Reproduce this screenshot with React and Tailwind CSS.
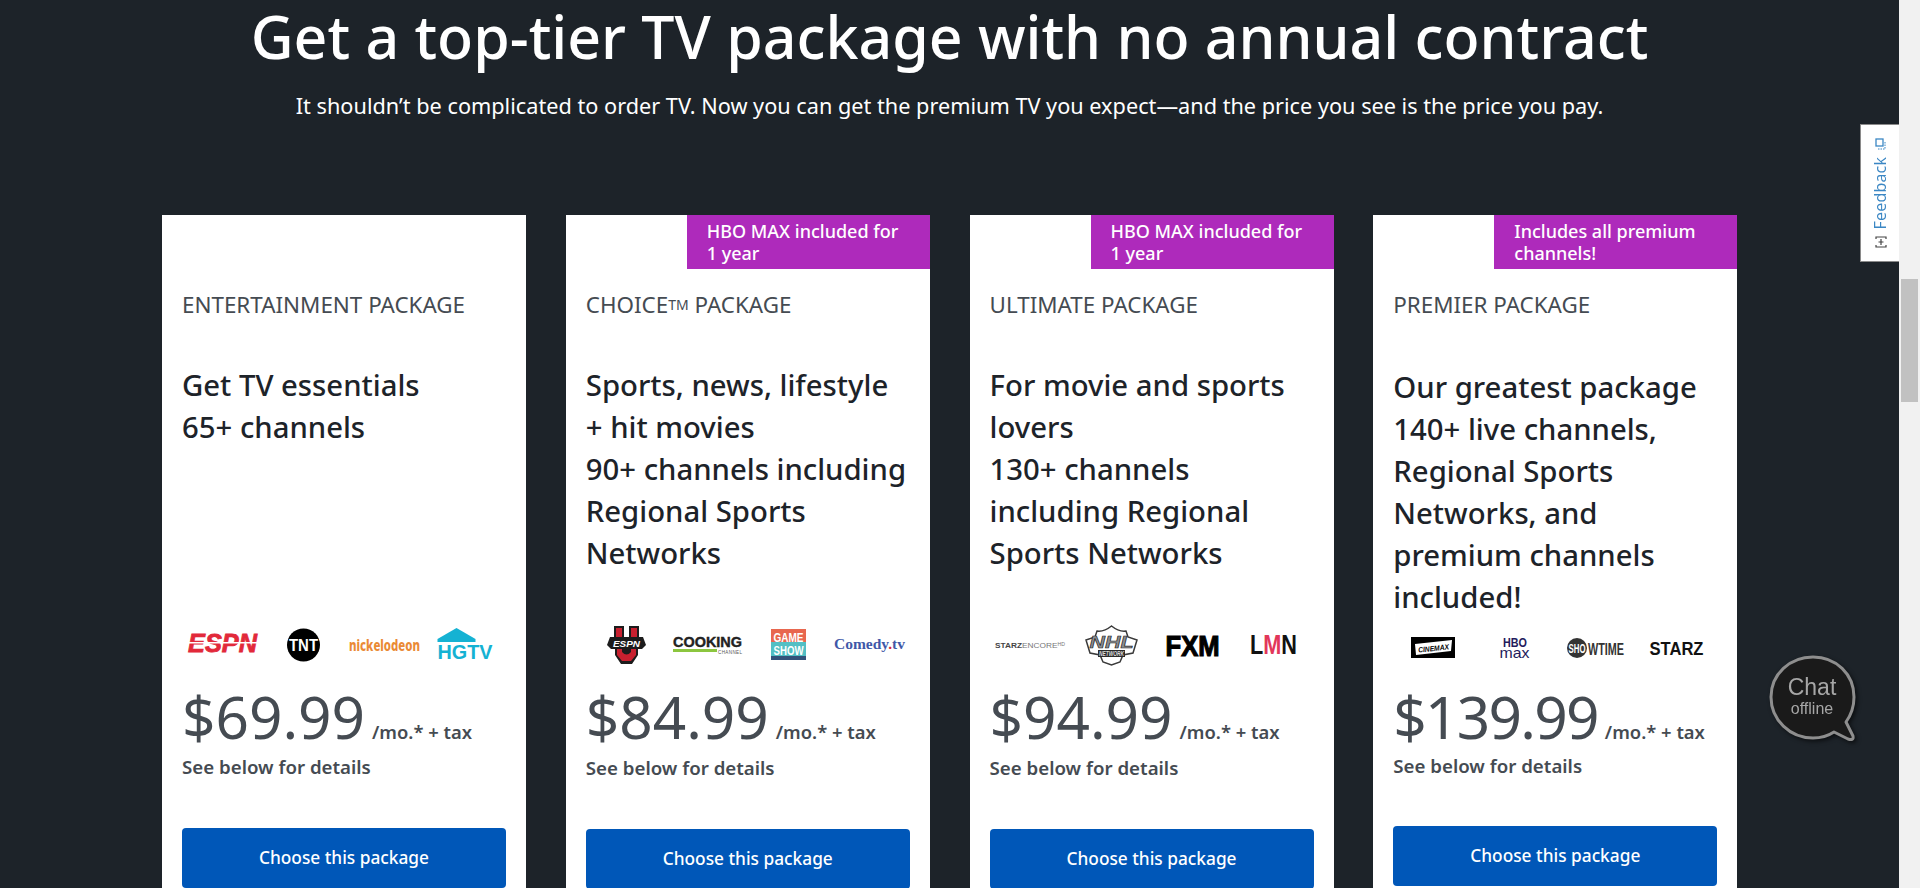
const font = { fontFamily: '"Noto Sans", sans-serif' };

function EspnLogo() {
  return (
    <svg viewBox="0 0 81 44" className="w-[81px] h-[44px]">
      <text x="40.5" y="29" textAnchor="middle" fontFamily="Liberation Sans" fontWeight="700" fontStyle="italic" fontSize="26" fill="#e2293a" stroke="#e2293a" strokeWidth="0.8" textLength="69" lengthAdjust="spacingAndGlyphs">ESPN</text>
      <rect x="5" y="19" width="71" height="1.5" fill="#fff" />
    </svg>
  );
}

function TntLogo() {
  return (
    <svg viewBox="0 0 81 44" className="w-[81px] h-[44px]">
      <circle cx="40.5" cy="22" r="16.5" fill="#000" />
      <text x="40.5" y="28" textAnchor="middle" fontFamily="Liberation Sans" fontWeight="700" fontSize="17" fill="#fff" textLength="29" lengthAdjust="spacingAndGlyphs">TNT</text>
    </svg>
  );
}

function NickLogo() {
  return (
    <svg viewBox="0 0 81 44" className="w-[81px] h-[44px]">
      <text x="40.5" y="28" textAnchor="middle" fontFamily="Noto Sans" fontWeight="800" fontSize="15" fill="#ea8a35" textLength="71" lengthAdjust="spacingAndGlyphs">nickelodeon</text>
    </svg>
  );
}

function HgtvLogo() {
  return (
    <svg viewBox="0 0 81 44" className="w-[81px] h-[44px]">
      <path d="M12.5 16 L31.5 5 L50.5 16 V19 H12.5 Z" fill="#15b2d3" />
      <text x="40" y="35.5" textAnchor="middle" fontFamily="Liberation Sans" fontWeight="700" fontSize="21" fill="#15b2d3" textLength="55" lengthAdjust="spacingAndGlyphs">HGTV</text>
    </svg>
  );
}

function EspnuLogo() {
  return (
    <svg viewBox="0 0 81 44" className="w-[81px] h-[44px]">
      <path d="M28 3 H38 V14 H43 V3 H53 V14 H57 L60 22 L56 26 H52 V32 L46 41 H35 L29 32 V26 H25 L21 22 L24 14 H28 Z" fill="#1c1c1c" />
      <path d="M30 5 H36 V14 H30 Z M45 5 H51 V14 H45 Z M31 26 H36 V29 Q40.5 34 45 29 V26 H50 V32 L45 38 H36 L31 32 Z" fill="#c8202f" />
      <text x="40.5" y="24" textAnchor="middle" fontFamily="Liberation Sans" fontWeight="700" fontStyle="italic" fontSize="9" fill="#fff" textLength="27" lengthAdjust="spacingAndGlyphs">ESPN</text>
    </svg>
  );
}

function CookingLogo() {
  return (
    <svg viewBox="0 0 81 44" className="w-[81px] h-[44px]">
      <text x="40.5" y="24" textAnchor="middle" fontFamily="Liberation Sans" fontWeight="700" fontSize="14" fill="#222" stroke="#222" strokeWidth="0.4" textLength="69" lengthAdjust="spacingAndGlyphs">COOKING</text>
      <rect x="6" y="26" width="44" height="3" fill="#8cc63f" />
      <text x="75" y="31" textAnchor="end" fontFamily="Liberation Sans" fontSize="4.5" fill="#555" textLength="24" lengthAdjust="spacing">CHANNEL</text>
    </svg>
  );
}

function GsnLogo() {
  return (
    <svg viewBox="0 0 81 44" className="w-[81px] h-[44px]">
      <rect x="23" y="6" width="35" height="15" fill="#e8674f" />
      <rect x="23" y="19" width="35" height="14" fill="#52bfc4" />
      <rect x="23" y="33" width="35" height="4" fill="#33527a" />
      <text x="40.5" y="18.5" textAnchor="middle" fontFamily="Liberation Sans" fontWeight="700" fontSize="13" fill="#fff" textLength="30" lengthAdjust="spacingAndGlyphs">GAME</text>
      <text x="40.5" y="31.5" textAnchor="middle" fontFamily="Liberation Sans" fontWeight="700" fontSize="13" fill="#fff" textLength="30" lengthAdjust="spacingAndGlyphs">SHOW</text>
    </svg>
  );
}

function ComedyLogo() {
  return (
    <svg viewBox="0 0 81 44" className="w-[81px] h-[44px]">
      <text x="40.5" y="26" textAnchor="middle" fontFamily="Liberation Serif" fontWeight="700" fontSize="14" fill="#3f58a8" textLength="71" lengthAdjust="spacingAndGlyphs">Comedy<tspan fill="#d8263c">.</tspan>tv</text>
    </svg>
  );
}

function EncoreLogo() {
  return (
    <svg viewBox="0 0 81 44" className="w-[81px] h-[44px]">
      <text x="5" y="25" fontFamily="Liberation Sans" fontSize="8" fill="#777" textLength="70" lengthAdjust="spacingAndGlyphs"><tspan fontWeight="700" fill="#444">STARZ</tspan>ENCORE<tspan fontSize="5" dy="-2">HD</tspan></text>
    </svg>
  );
}

function NhlLogo() {
  return (
    <svg viewBox="0 0 81 44" className="w-[81px] h-[44px]">
      <path d="M26 8 Q33 9 40.5 3 Q48 9 55 8 L57 14 L66 17 L62 30 L52 32 L49 39 L40.5 42 L32 39 L29 32 L19 30 L15 17 L24 14 Z" fill="#fff" stroke="#3a3a3a" strokeWidth="1.5" />
      <text x="40.5" y="25" textAnchor="middle" fontFamily="Liberation Sans" fontWeight="700" fontStyle="italic" fontSize="17" fill="#8b8d90" stroke="#222" strokeWidth="0.6" textLength="44" lengthAdjust="spacingAndGlyphs">NHL</text>
      <rect x="27" y="27" width="27" height="7" fill="#2b2b2b" />
      <text x="40.5" y="33" textAnchor="middle" fontFamily="Liberation Sans" fontWeight="700" fontStyle="italic" fontSize="6.5" fill="#ddd" textLength="25" lengthAdjust="spacingAndGlyphs">NETWORK</text>
    </svg>
  );
}

function FxmLogo() {
  return (
    <svg viewBox="0 0 81 44" className="w-[81px] h-[44px]">
      <text x="40.5" y="33" textAnchor="middle" fontFamily="Liberation Sans" fontWeight="700" fontSize="30" fill="#000" stroke="#000" strokeWidth="1.2" textLength="54" lengthAdjust="spacingAndGlyphs">FXM</text>
    </svg>
  );
}

function LmnLogo() {
  return (
    <svg viewBox="0 0 81 44" className="w-[81px] h-[44px]">
      <text x="40.5" y="31" textAnchor="middle" fontFamily="Liberation Sans" fontWeight="700" fontSize="27" fill="#111" textLength="47" lengthAdjust="spacingAndGlyphs">L<tspan fill="#e2375a">M</tspan>N</text>
    </svg>
  );
}

function CinemaxLogo() {
  return (
    <svg viewBox="0 0 81 44" className="w-[81px] h-[44px]">
      <rect x="18" y="11" width="44" height="21" fill="#000" />
      <path d="M22 18 L59 14 L58 25 L23 29 Z" fill="#fff" />
      <text x="40.5" y="25" textAnchor="middle" fontFamily="Liberation Sans" fontWeight="700" fontStyle="italic" fontSize="7.5" fill="#000" textLength="31" lengthAdjust="spacingAndGlyphs" transform="rotate(-6 40.5 22)">CINEMAX</text>
    </svg>
  );
}

function HboMaxLogo() {
  return (
    <svg viewBox="0 0 81 44" className="w-[81px] h-[44px]">
      <text x="41" y="21" textAnchor="middle" fontFamily="Liberation Sans" fontWeight="700" fontSize="12" fill="#241b5c" textLength="24" lengthAdjust="spacingAndGlyphs">HBO</text>
      <text x="40.5" y="32" textAnchor="middle" fontFamily="Liberation Sans" fontSize="15" fill="#241b5c" textLength="30" lengthAdjust="spacingAndGlyphs">max</text>
    </svg>
  );
}

function ShowtimeLogo() {
  return (
    <svg viewBox="0 0 81 44" className="w-[81px] h-[44px]">
      <circle cx="22" cy="22" r="10" fill="#333" />
      <text x="22" y="27" textAnchor="middle" fontFamily="Liberation Sans" fontWeight="700" fontSize="12" fill="#fff" textLength="17" lengthAdjust="spacingAndGlyphs">SHO</text>
      <text x="33" y="29" fontFamily="Liberation Sans" fontWeight="700" fontSize="17" fill="#333" textLength="36" lengthAdjust="spacingAndGlyphs">WTIME</text>
    </svg>
  );
}

function StarzLogo() {
  return (
    <svg viewBox="0 0 81 44" className="w-[81px] h-[44px]">
      <text x="40.5" y="29" textAnchor="middle" fontFamily="Liberation Sans" fontWeight="700" fontSize="18" fill="#111" textLength="54" lengthAdjust="spacingAndGlyphs">STARZ</text>
    </svg>
  );
}

const packages = [
  {
    title: 'ENTERTAINMENT PACKAGE',
    lines: ['Get TV essentials', '65+ channels'],
    descClass: 'h-[259px] mt-[45px]',
    logos: [EspnLogo, TntLogo, NickLogo, HgtvLogo],
    price: '$69.99',
    tail: 'mt-[13px]',
    details: 'mt-[3px]',
    btn: 'mt-[49px]',
  },
  {
    tag: 'HBO MAX included for 1 year',
    title: 'CHOICE',
    lines: ['Sports, news, lifestyle', '+ hit movies', '90+ channels including', 'Regional Sports', 'Networks'],
    descClass: 'h-[259px] mt-[45px]',
    logos: [EspnuLogo, CookingLogo, GsnLogo, ComedyLogo],
    price: '$84.99',
    tail: 'mt-[13px]',
    details: 'mt-[4px]',
    btn: 'mt-[49px]',
  },
  {
    tag: 'HBO MAX included for 1 year',
    title: 'ULTIMATE PACKAGE',
    lines: ['For movie and sports', 'lovers', '130+ channels', 'including Regional', 'Sports Networks'],
    descClass: 'h-[259px] mt-[45px]',
    logos: [EncoreLogo, NhlLogo, FxmLogo, LmnLogo],
    price: '$94.99',
    tail: 'mt-[13px]',
    details: 'mt-[4px]',
    btn: 'mt-[49px]',
  },
  {
    tag: 'Includes all premium channels!',
    title: 'PREMIER PACKAGE',
    lines: ['Our greatest package', '140+ live channels,', 'Regional Sports', 'Networks, and', 'premium channels', 'included!'],
    descClass: 'h-[260px] mt-[47px]',
    logos: [CinemaxLogo, HboMaxLogo, ShowtimeLogo, StarzLogo],
    price: '$139.99',
    priceClass: 'tracking-[-1.7px]',
    tail: 'mt-[10px]',
    details: 'mt-[2px]',
    btn: 'mt-[48px]',
  },
];

function PackageCard({ pkg }) {
  return (
    <div className="relative w-[364px] h-[700px] bg-white px-5 pt-[76px] shrink-0">
      {pkg.tag && (
        <div className="absolute top-0 right-0 w-[243px] h-[54px] bg-[#ae2abb] pl-[20px] pr-6 pt-[5px] text-white text-[18px] leading-[22px] font-medium">
          {pkg.tag}
        </div>
      )}
      <div className="text-[22.4px] leading-7 text-[#454b52]">
        {pkg.title === 'CHOICE' ? (
          <>CHOICE<span className="text-[14px] align-[3px]">TM</span> PACKAGE</>
        ) : pkg.title}
      </div>
      <div className={`${pkg.descClass} text-[29.3px] leading-[42px] font-medium text-[#1d2329]`}>
        {pkg.lines.map((line) => (
          <div key={line}>{line}</div>
        ))}
      </div>
      <div className="grid grid-cols-4 h-[44px]">
        {pkg.logos.map((Logo, i) => (
          <div key={i} className="flex justify-center">
            <Logo />
          </div>
        ))}
      </div>
      <div className={`${pkg.tail} flex items-baseline whitespace-nowrap text-[#454b52]`}>
        <span className={`${pkg.priceClass || ''} text-[58.5px] leading-[72px]`}>{pkg.price}</span>
        <span className="ml-[7px] text-[18.4px] font-semibold">/mo.* + tax</span>
      </div>
      <div className={`${pkg.details} text-[18.7px] leading-6 font-semibold text-[#454b52]`}>See below for details</div>
      <button className={`${pkg.btn} w-full h-[60px] rounded bg-[#0057b8] text-white text-[17.3px] font-medium`}>
        Choose this package
      </button>
    </div>
  );
}

function FeedbackTab() {
  return (
    <div className="absolute top-[124px] right-[21px] w-[39px] h-[138px] bg-white border-y border-l border-[#8a8a8a] flex flex-col items-center justify-between py-[13px]">
      <svg viewBox="0 0 12 12" className="w-3 h-3 ml-[2px]">
        <rect x="1" y="1" width="7" height="7" fill="none" stroke="#3b87c4" strokeWidth="1.3" />
        <path d="M10 4 V11 H3" fill="none" stroke="#3b87c4" strokeWidth="1" strokeDasharray="1.5 1" />
      </svg>
      <span className="[writing-mode:vertical-rl] rotate-180 text-[16px] leading-none text-[#3b87c4] tracking-[0.2px]" style={{ fontFamily: '"Open Sans", sans-serif' }}>
        Feedback
      </span>
      <svg viewBox="0 0 12 12" className="w-3 h-3 ml-[2px]">
        <path d="M1 3 V1 H11 V3 M1 9 V11 H11 V9 M6 3 V9 M3.5 6 H8.5" fill="none" stroke="#444" strokeWidth="1.2" />
      </svg>
    </div>
  );
}

function ChatBubble() {
  return (
    <div className="absolute top-[654px] left-[1768px] w-[90px] h-[90px] drop-shadow-[2px_2px_2px_rgba(0,0,0,0.6)]">
      <svg viewBox="0 0 90 90" className="absolute inset-0 w-full h-full">
        <path d="M45 3 C68 3 86 20 86 43 C86 53 83 61 78 68 L85 82 Q86 87 80 85 L66 78 C60 82 53 84 45 84 C22 84 3 66 3 43 C3 20 22 3 45 3 Z" fill="#1a1a1a" stroke="#8e8e8e" strokeWidth="3" strokeLinejoin="round" />
      </svg>
      <div className="absolute inset-0 flex flex-col items-center pt-[20px] text-[#a6a6a6]" style={{ fontFamily: '"Liberation Sans", sans-serif' }}>
        <span className="text-[23px] leading-[26px] pr-[2px]">Chat</span>
        <span className="text-[16px] leading-[18px] pr-[2px]">offline</span>
      </div>
    </div>
  );
}

export default function App() {
  return (
    <div className="relative flex h-[888px] w-full overflow-hidden bg-[#1d2329]" style={font}>
      <main className="flex-1 min-w-0">
        <h1 className="text-[59px] leading-[68px] font-medium text-white text-center pt-[2px]">
          Get a top-tier TV package with no annual contract
        </h1>
        <p className="mt-[20px] text-[21.7px] leading-[32px] text-white text-center">
          It shouldn’t be complicated to order TV. Now you can get the premium TV you expect—and the price you see is the price you pay.
        </p>
        <div className="mt-[93px] flex justify-between pl-[162px] pr-[161.7px]">
          {packages.map((pkg) => (
            <PackageCard key={pkg.title} pkg={pkg} />
          ))}
        </div>
      </main>
      <div className="w-[21px] shrink-0 bg-[#f1f1f1] px-[2px]">
        <div className="mt-[279px] h-[123px] bg-[#c1c1c1]" />
      </div>
      <FeedbackTab />
      <ChatBubble />
    </div>
  );
}
